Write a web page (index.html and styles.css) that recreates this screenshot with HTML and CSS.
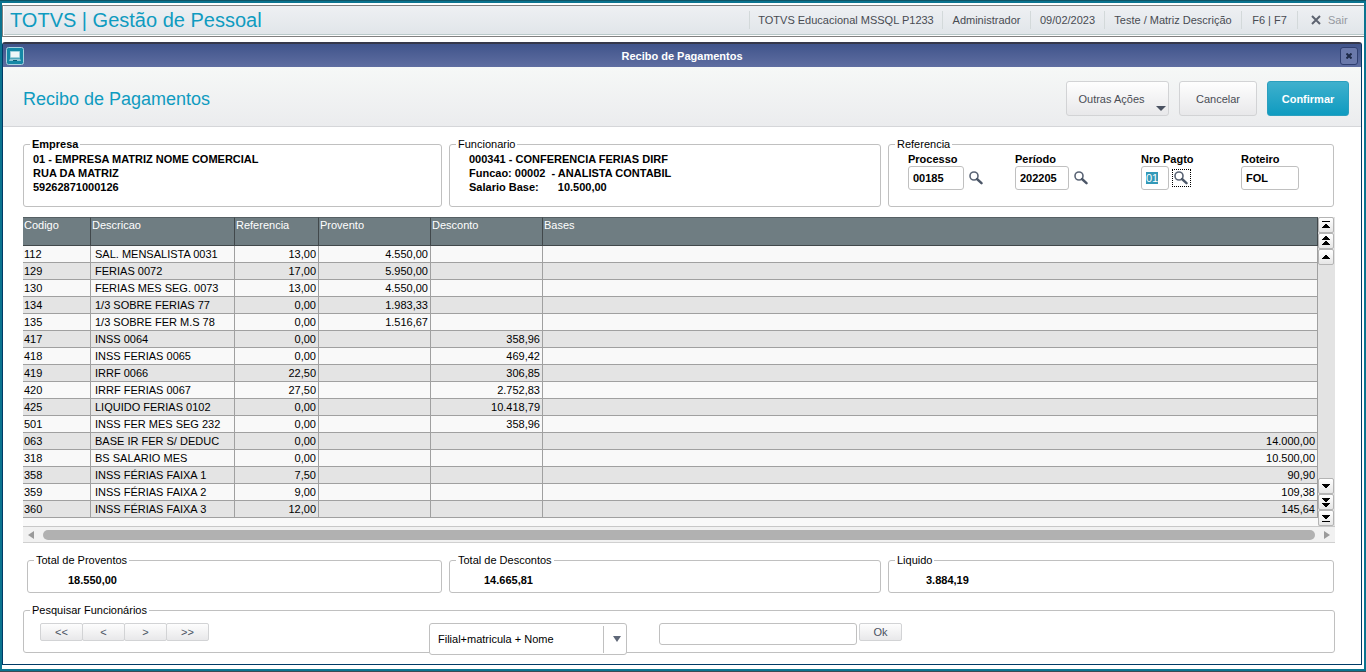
FILE: index.html
```html
<!DOCTYPE html>
<html lang="pt-BR">
<head>
    <meta charset="UTF-8">
    <meta name="viewport" content="width=device-width, initial-scale=1.0">
    <title>TOTVS | Gestão de Pessoal</title>
    <link rel="stylesheet" href="styles.css">
</head>
<body>

    <svg class="sprite" aria-hidden="true">
        <symbol id="lupa" viewBox="0 0 14 14">
            <circle cx="5" cy="5" r="4" fill="none" stroke="#5a6475" stroke-width="1.6"/>
            <path d="M8 8 L12.5 12.2" stroke="#4b5667" stroke-width="2.4" stroke-linecap="round"/>
        </symbol>
        <symbol id="up" viewBox="0 0 16 16"><path d="M4 10h8v-1h-1v-1h-1v-1h-1v-1h-2v1h-1v1h-1v1h-1z"/></symbol>
        <symbol id="up2" viewBox="0 0 16 16"><path d="M4 7h8v-1h-1v-1h-1v-1h-1v-1h-2v1h-1v1h-1v1h-1zM4 12h8v-1h-1v-1h-1v-1h-1v-1h-2v1h-1v1h-1v1h-1z"/></symbol>
        <symbol id="top" viewBox="0 0 16 16"><path d="M4 4h8v1h-8zM4 11h8v-1h-1v-1h-1v-1h-1v-1h-2v1h-1v1h-1v1h-1z"/></symbol>
    </svg>

    <div class="app">
        <header class="topbar">
            <h1>TOTVS | Gestão de Pessoal</h1>
            <ul class="info">
                <li class="env">TOTVS Educacional MSSQL P1233</li>
                <li class="user">Administrador</li>
                <li class="date">09/02/2023</li>
                <li class="branch">Teste / Matriz Descrição</li>
                <li class="keys">F6 | F7</li>
                <li class="exit">
                    <button class="sair" type="button">
                        <svg width="10" height="10" viewBox="0 0 10 10"><path d="M1 1L9 9M9 1L1 9" stroke="#5d6370" stroke-width="2"/></svg>
                        Sair
                    </button>
                </li>
            </ul>
        </header>

        <main class="window">
            <div class="titlebar">
                <svg width="18" height="18" viewBox="0 0 18 18">
                    <rect x="0.5" y="0.5" width="17" height="17" rx="2" fill="#1588a6" stroke="#a9d3e0"/>
                    <path d="M4.5 4.5h9v6h-9z" fill="#eef6f8" stroke="#9fd0dc"/>
                    <path d="M4 11.5h10l1 2.5h-12z" fill="#8cc5d4"/>
                    <path d="M7 13h4v1h-4z" fill="#0b5d74"/>
                </svg>
                <span>Recibo de Pagamentos</span>
                <button class="close-btn" type="button" aria-label="Fechar">
                    <svg width="6" height="6" viewBox="0 0 6 6"><path d="M0.5 0.5L5.5 5.5M5.5 0.5L0.5 5.5" stroke="#1d2947" stroke-width="2"/></svg>
                </button>
            </div>

            <div class="heading">
                <h2>Recibo de Pagamentos</h2>
                <button class="btn more" type="button">Outras Ações</button>
                <button class="btn cancel" type="button">Cancelar</button>
                <button class="btn confirm" type="button">Confirmar</button>
            </div>

            <form class="content">
                <div class="boxes">
                    <fieldset class="box">
                        <legend class="strong">Empresa</legend>
                        <p>01 - EMPRESA MATRIZ NOME COMERCIAL</p>
                        <p>RUA DA MATRIZ</p>
                        <p>59262871000126</p>
                    </fieldset>
                    <fieldset class="box func">
                        <legend>Funcionario</legend>
                        <p>000341 - CONFERENCIA FERIAS DIRF</p>
                        <p>Funcao: 00002 &nbsp;- ANALISTA CONTABIL</p>
                        <p>Salario Base: <span class="salary">10.500,00</span></p>
                    </fieldset>
                    <fieldset class="box">
                        <legend>Referencia</legend>
                        <div class="params">
                            <div class="field processo">
                                <label for="processo">Processo</label>
                                <input type="text" id="processo" value="00185">
                                <button class="lookup" type="button" aria-label="Pesquisar processo"><svg><use href="#lupa"/></svg></button>
                            </div>
                            <div class="field periodo">
                                <label for="periodo">Período</label>
                                <input type="text" id="periodo" value="202205">
                                <button class="lookup" type="button" aria-label="Pesquisar período"><svg><use href="#lupa"/></svg></button>
                            </div>
                            <div class="field pagto">
                                <label for="pagto">Nro Pagto</label>
                                <input type="text" id="pagto" value="01">
                                <button class="lookup active" type="button" aria-label="Pesquisar pagamento"><svg><use href="#lupa"/></svg></button>
                            </div>
                            <div class="field roteiro">
                                <label for="roteiro">Roteiro</label>
                                <input type="text" id="roteiro" value="FOL">
                            </div>
                        </div>
                    </fieldset>
                </div>

                <div class="grid">
                    <div class="grid-body">
                        <table>
                            <thead>
                                <tr>
                                    <th class="c-cod">Codigo</th>
                                    <th class="c-desc">Descricao</th>
                                    <th class="c-ref">Referencia</th>
                                    <th class="c-val">Provento</th>
                                    <th class="c-val">Desconto</th>
                                    <th>Bases</th>
                                </tr>
                            </thead>
                            <tbody>
                                <tr><td>112</td><td>SAL. MENSALISTA 0031</td><td>13,00</td><td>4.550,00</td><td></td><td></td></tr>
                                <tr><td>129</td><td>FERIAS 0072</td><td>17,00</td><td>5.950,00</td><td></td><td></td></tr>
                                <tr><td>130</td><td>FERIAS MES SEG. 0073</td><td>13,00</td><td>4.550,00</td><td></td><td></td></tr>
                                <tr><td>134</td><td>1/3 SOBRE FERIAS 77</td><td>0,00</td><td>1.983,33</td><td></td><td></td></tr>
                                <tr><td>135</td><td>1/3 SOBRE FER M.S 78</td><td>0,00</td><td>1.516,67</td><td></td><td></td></tr>
                                <tr><td>417</td><td>INSS 0064</td><td>0,00</td><td></td><td>358,96</td><td></td></tr>
                                <tr><td>418</td><td>INSS FERIAS 0065</td><td>0,00</td><td></td><td>469,42</td><td></td></tr>
                                <tr><td>419</td><td>IRRF 0066</td><td>22,50</td><td></td><td>306,85</td><td></td></tr>
                                <tr><td>420</td><td>IRRF FERIAS 0067</td><td>27,50</td><td></td><td>2.752,83</td><td></td></tr>
                                <tr><td>425</td><td>LIQUIDO FERIAS 0102</td><td>0,00</td><td></td><td>10.418,79</td><td></td></tr>
                                <tr><td>501</td><td>INSS FER MES SEG 232</td><td>0,00</td><td></td><td>358,96</td><td></td></tr>
                                <tr><td>063</td><td>BASE IR FER S/ DEDUC</td><td>0,00</td><td></td><td></td><td>14.000,00</td></tr>
                                <tr><td>318</td><td>BS SALARIO MES</td><td>0,00</td><td></td><td></td><td>10.500,00</td></tr>
                                <tr><td>358</td><td>INSS FÉRIAS FAIXA 1</td><td>7,50</td><td></td><td></td><td>90,90</td></tr>
                                <tr><td>359</td><td>INSS FÉRIAS FAIXA 2</td><td>9,00</td><td></td><td></td><td>109,38</td></tr>
                                <tr><td>360</td><td>INSS FÉRIAS FAIXA 3</td><td>12,00</td><td></td><td></td><td>145,64</td></tr>
                            </tbody>
                        </table>
                        <div class="vscroll">
                            <div>
                                <button type="button" aria-label="Início"><svg><use href="#top"/></svg></button>
                                <button type="button" aria-label="Página acima"><svg><use href="#up2"/></svg></button>
                                <button type="button" aria-label="Linha acima"><svg><use href="#up"/></svg></button>
                            </div>
                            <div class="down">
                                <button type="button" aria-label="Linha abaixo"><svg><use href="#up"/></svg></button>
                                <button type="button" aria-label="Página abaixo"><svg><use href="#up2"/></svg></button>
                                <button type="button" aria-label="Fim"><svg><use href="#top"/></svg></button>
                            </div>
                        </div>
                    </div>
                    <div class="hscroll">
                        <svg width="6" height="8" viewBox="0 0 6 8"><path d="M6 0v8L0 4z" fill="#9a9a9a"/></svg>
                        <div class="thumb"></div>
                        <svg width="6" height="8" viewBox="0 0 6 8"><path d="M0 0v8L6 4z" fill="#9a9a9a"/></svg>
                    </div>
                </div>

                <div class="boxes totals">
                    <fieldset class="box proventos">
                        <legend>Total de Proventos</legend>
                        <p>18.550,00</p>
                    </fieldset>
                    <fieldset class="box descontos">
                        <legend>Total de Descontos</legend>
                        <p>14.665,81</p>
                    </fieldset>
                    <fieldset class="box liquido">
                        <legend>Liquido</legend>
                        <p>3.884,19</p>
                    </fieldset>
                </div>

                <fieldset class="box search">
                    <legend>Pesquisar Funcionários</legend>
                    <div class="search-row">
                        <div class="nav">
                            <button type="button">&lt;&lt;</button>
                            <button type="button">&lt;</button>
                            <button type="button">&gt;</button>
                            <button type="button">&gt;&gt;</button>
                        </div>
                        <div class="combo">
                            <select aria-label="Ordem de pesquisa">
                                <option>Filial+matricula + Nome</option>
                            </select>
                        </div>
                        <input type="text" class="query" aria-label="Pesquisar">
                        <button class="ok" type="button">Ok</button>
                    </div>
                </fieldset>
            </form>
        </main>
    </div>

    <script>
        document.getElementById("pagto").select();
    </script>

</body>
</html>
```
FILE: styles.css
```css
* {
    box-sizing: border-box;
}
body {
    margin: 0;
    padding: 2px;
    border-top: 1px solid #0f5566;
    border-bottom: 1px solid #3d4a52;
    background: #0b7490;
    font-family: "Liberation Sans", Arial, sans-serif;
    font-size: 11px;
    line-height: 14px;
    color: #000;
}
h1, h2, p, ul {
    margin: 0;
    padding: 0;
}
h1, h2 {
    font-weight: normal;
}
button, input, select {
    font: inherit;
    margin: 0;
    padding: 0;
    cursor: pointer;
}
svg {
    display: block;
    flex: none;
}
.sprite {
    position: absolute;
    width: 0;
    height: 0;
}
.app {
    background: #fff;
    padding: 2px 0 4px;
}

/* top bar */
.topbar {
    display: flex;
    align-items: center;
    height: 32px;
    padding-bottom: 2px;
    border: 1px solid #808080;
    border-right: none;
    box-shadow: inset 1px 0 #fff, inset 0 -1px #fff, inset 0 -2px #b9c9c9;
    background: linear-gradient(#eef0f3, #e0e5e9);
}
.topbar h1 {
    flex: 1;
    padding-left: 7px;
    font-size: 20px;
    line-height: 24px;
    color: #0f9bc0;
}
.info {
    display: flex;
    list-style: none;
    color: #484b52;
}
.info li {
    height: 18px;
    padding: 2px 0;
    border-left: 1px solid #d3d9da;
    text-align: center;
    white-space: nowrap;
}
.info .env {
    width: 193px;
}
.info .user {
    width: 88px;
}
.info .date {
    width: 74px;
}
.info .branch {
    width: 137px;
}
.info .keys {
    width: 56px;
}
.info .exit {
    width: 67px;
    padding-left: 13px;
}
.sair {
    display: flex;
    align-items: center;
    gap: 7px;
    border: none;
    background: none;
    color: #9598a0;
}

/* window */
.window {
    margin: 5px 2px 0 0;
    border: 1px solid #003a66;
    border-top: 2px solid #35384a;
    border-radius: 3px 3px 0 0;
}
.titlebar {
    display: flex;
    align-items: center;
    height: 23px;
    padding: 0 3px;
    background: linear-gradient(#40548b, #5f6ea1);
    color: #fff;
    font-weight: bold;
}
.titlebar span {
    flex: 1;
    text-align: center;
}
.close-btn {
    display: flex;
    align-items: center;
    justify-content: center;
    width: 18px;
    height: 18px;
    border: 1px solid #2f3f70;
    border-radius: 3px;
    background: #6a79ab;
}
.heading {
    display: flex;
    align-items: center;
    height: 60px;
    padding: 4px 12px 0 20px;
    border-bottom: 1px solid #d5d6d9;
    background: linear-gradient(#f6f8f7, #ebecee);
}
.heading h2 {
    flex: 1;
    font-size: 18px;
    line-height: 22px;
    color: #0f9bc0;
}
.btn {
    position: relative;
    height: 35px;
    border: 1px solid #d2d3d5;
    border-radius: 3px;
    background: linear-gradient(#fefefe, #e8e8ea);
    color: #4a4d55;
}
.more {
    width: 103px;
    margin-right: 10px;
    padding-right: 12px;
}
.more::after {
    content: "";
    position: absolute;
    right: 2px;
    bottom: 4px;
    border: 5px solid transparent;
    border-top-color: #4a5261;
    border-bottom: none;
}
.cancel {
    width: 78px;
    margin-right: 10px;
}
.confirm {
    width: 82px;
    border-color: #2a9fbe;
    background: linear-gradient(#3fb0cd, #0f9bc0);
    color: #fff;
    font-weight: bold;
}

/* content */
.content {
    display: flex;
    flex-direction: column;
    gap: 10px;
    padding: 10px 26px 11px 20px;
}
.boxes {
    display: grid;
    grid-template-columns: 419fr 432fr 446fr;
    gap: 7px;
    padding-right: 1px;
}
.box {
    height: 70px;
    min-width: 0;
    margin: 0;
    padding: 1px 0 0 9px;
    border: 1px solid #c0c0c0;
    border-radius: 3px;
    font-weight: bold;
}
.box legend {
    margin-left: -3px;
    padding: 0 2px;
    font-weight: normal;
}
.box .strong {
    font-weight: bold;
}
.func p {
    padding-left: 10px;
}
.salary {
    margin-left: 16px;
}
.params {
    display: flex;
    padding-left: 10px;
}
.field {
    display: grid;
    grid-template-columns: auto 1fr;
    column-gap: 3px;
    align-items: center;
}
.field label {
    grid-column: 1 / 3;
}
.field input {
    width: 100%;
    height: 24px;
    padding: 0 4px;
    border: 1px solid #c0c0c0;
    border-radius: 3px;
    outline: none;
    font-weight: bold;
}
.field input::selection {
    background: #3399b8;
    color: #fff;
}
.processo {
    width: 107px;
    grid-template-columns: 56px 1fr;
}
.periodo {
    width: 126px;
    grid-template-columns: 54px 1fr;
}
.pagto {
    width: 100px;
    grid-template-columns: 28px 1fr;
}
.pagto input {
    font-weight: normal;
}
.roteiro {
    grid-template-columns: 58px;
}
.roteiro label {
    grid-column: 1;
}
.lookup {
    width: 19px;
    height: 18px;
    padding: 1px;
    border: 1px solid transparent;
    background: none;
}
.lookup svg {
    width: 14px;
    height: 14px;
}
.lookup.active {
    border: 1px dotted #000;
}

/* grid */
.grid-body {
    display: flex;
    align-items: flex-start;
    height: 309px;
    background: #f9f9f9;
}
table {
    flex: 1;
    table-layout: fixed;
    width: 100%;
    border-collapse: separate;
    border-spacing: 0;
}
th {
    height: 29px;
    padding: 0 1px;
    border-top: 1px solid #566064;
    border-right: 1px solid #41484b;
    border-bottom: 1px solid #41484b;
    background: #6f7d82;
    color: #fff;
    font-weight: normal;
    text-align: left;
    vertical-align: top;
}
td {
    height: 17px;
    padding: 1px 2px 1px 1px;
    border-right: 1px solid #a0a0a0;
    border-bottom: 1px solid #a0a0a0;
    text-align: right;
}
td:nth-child(1) {
    text-align: left;
}
td:nth-child(2) {
    padding-left: 4px;
    text-align: left;
}
tbody tr:nth-child(even) {
    background: #e4e4e4;
}
.c-cod {
    width: 68px;
}
.c-desc {
    width: 144px;
}
.c-ref {
    width: 84px;
}
.c-val {
    width: 112px;
}
.vscroll {
    display: flex;
    flex-direction: column;
    justify-content: space-between;
    width: 17px;
    height: 100%;
    background: #e3e3e3;
}
.vscroll button {
    display: block;
    width: 16px;
    height: 16px;
    border: 1px solid #b4b4b4;
    border-radius: 2px;
    background: linear-gradient(#fff, #e6e6e6);
}
.vscroll svg {
    width: 16px;
    height: 16px;
    margin: -1px;
}
.down svg {
    transform: rotate(180deg);
}
.hscroll {
    display: flex;
    align-items: center;
    gap: 9px;
    height: 17px;
    padding: 0 5px;
    border-top: 1px solid #c8c8c8;
    border-bottom: 1px solid #d0d0d0;
    background: #f1f1f1;
}
.thumb {
    flex: 1;
    height: 10px;
    border-radius: 5px;
    background: #b1b1b1;
}

/* totals */
.totals .box {
    height: 40px;
    padding-top: 6px;
}
.totals .proventos {
    margin-left: 4px;
}
.proventos p {
    padding-left: 31px;
}
.descontos p {
    padding-left: 25px;
}
.liquido p {
    padding-left: 28px;
}

/* search */
.search {
    height: 50px;
    padding-top: 6px;
    font-weight: normal;
}
.search-row {
    display: flex;
    align-items: flex-start;
    padding-left: 7px;
}
.nav {
    display: flex;
    width: 389px;
}
.nav button, .ok {
    width: 43px;
    height: 18px;
    border: 1px solid #d2d3d5;
    border-radius: 2px;
    background: linear-gradient(#fdfdfd, #e8e8ea);
    color: #4a5261;
}
.nav button + button {
    margin-left: -1px;
}
.combo {
    position: relative;
    width: 198px;
    margin-right: 32px;
}
.combo select {
    display: block;
    appearance: none;
    width: 100%;
    height: 32px;
    padding-left: 8px;
    border: 1px solid #c0c0c0;
    border-radius: 3px;
    background: #fff;
    color: #000;
}
.combo::before {
    content: "";
    position: absolute;
    top: 3px;
    bottom: 2px;
    right: 23px;
    border-left: 1px solid #c0c0c0;
}
.combo::after {
    content: "";
    position: absolute;
    top: 13px;
    right: 6px;
    border: 4px solid transparent;
    border-top: 6px solid #5f6878;
    border-bottom: none;
}
.query {
    width: 198px;
    height: 22px;
    margin-right: 2px;
    padding: 0 4px;
    border: 1px solid #c0c0c0;
    border-radius: 3px;
}
```
